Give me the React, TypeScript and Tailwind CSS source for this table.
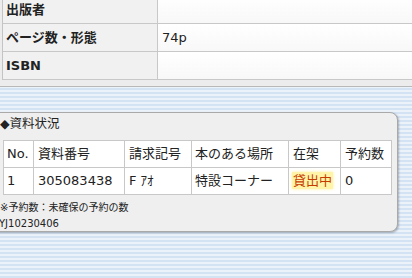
import React from 'react';

const font = { fontFamily: '"DejaVu Sans", "Noto Sans CJK JP", sans-serif' };

const bibRows = [
  { label: '出版者', value: '' },
  { label: 'ページ数・形態', value: '74p' },
  { label: 'ISBN', value: '' },
];

const App: React.FC = () => {
  return (
    <div
      className="w-[412px] h-[278px] overflow-hidden text-[#222]"
      style={{
        ...font,
        backgroundImage:
          'repeating-linear-gradient(to bottom, #d4e3f4 0px, #d4e3f4 2px, #ebf2fa 2px, #ebf2fa 4px)',
      }}
    >
      {/* Bibliographic detail rows */}
      <div className="bg-[#ececec] border-b border-[#b8b8b8] pb-[6px]">
        <div className="-mt-[4px] ml-[2px] border-l border-[#c4c4c4]">
          {bibRows.map((r) => (
            <div key={r.label} className="flex h-[28px] border-b border-[#c8c8c8]">
              <div className="w-[155px] shrink-0 bg-[#f1f1f1] border-r border-[#c8c8c8] flex items-center pl-[3px] text-[13px] font-bold">
                {r.label}
              </div>
              <div className="flex-1 bg-gradient-to-b from-white to-[#f8f8f8] flex items-center pl-[4px] text-[13px]">
                {r.value}
              </div>
            </div>
          ))}
        </div>
      </div>

      {/* Holdings status box */}
      <div className="mt-[25px] -ml-[6px] w-[404px] h-[120px] bg-[#efefef] border border-[#a9a9a9] rounded-r-[8px] shadow-[1px_1px_2px_rgba(0,0,0,0.25)]">
        <div className="h-[27px] pt-[2px] pl-[5px] text-[12.5px] leading-[18px]">
          ◆資料状況
        </div>
        <table className="ml-[8px] border-collapse bg-white text-[13px]">
          <tbody>
            <tr className="h-[27px]">
              <td className="w-[30px] border border-[#c8c8c8] pl-[3px]">No.</td>
              <td className="w-[91px] border border-[#c8c8c8] pl-[4px]">資料番号</td>
              <td className="w-[67px] border border-[#c8c8c8] pl-[4px]">請求記号</td>
              <td className="w-[97px] border border-[#c8c8c8] pl-[3px]">本のある場所</td>
              <td className="w-[52px] border border-[#c8c8c8] pl-[4px]">在架</td>
              <td className="w-[51px] border border-[#c8c8c8] pl-[4px]">予約数</td>
            </tr>
            <tr className="h-[27px]">
              <td className="border border-[#c8c8c8] pl-[3px]">1</td>
              <td className="border border-[#c8c8c8] pl-[4px]">305083438</td>
              <td className="border border-[#c8c8c8] pl-[4px]">F ｱｵ</td>
              <td className="border border-[#c8c8c8] pl-[3px]">特設コーナー</td>
              <td className="border border-[#c8c8c8] pl-[3px]">
                <span className="px-[1px] py-[1px] bg-[#fff4a8] text-[#c63c00] shadow-[0_0_3px_#fff0a0]">貸出中</span>
              </td>
              <td className="border border-[#c8c8c8] pl-[4px]">0</td>
            </tr>
          </tbody>
        </table>
        <div className="mt-[5px] pl-[5px] text-[10px] leading-[16px]">※予約数：未確保の予約の数</div>
        <div className="ml-[4px] text-[10px] leading-[16px]">YJ10230406</div>
      </div>
    </div>
  );
};

export default App;
